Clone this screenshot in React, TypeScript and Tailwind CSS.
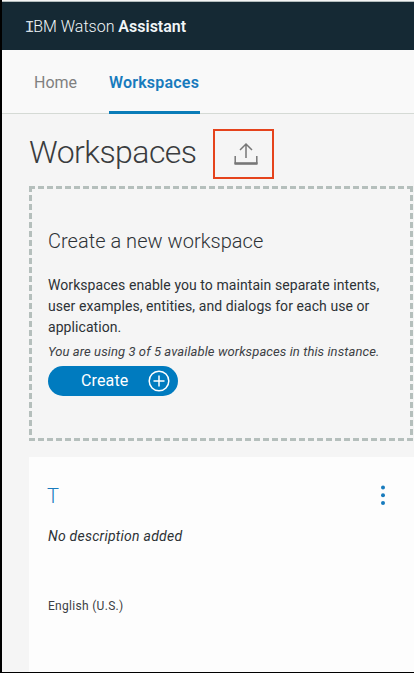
import React from "react";

function Header() {
  return (
    <header className="flex h-[48px] shrink-0 items-center bg-[#152934] pt-[2px] pl-6 text-base text-[#f1f6f8]">
      <h1 className="whitespace-pre leading-6">
        <span className="-mx-[1.5px] font-['Liberation_Mono',monospace] text-[17px] leading-none text-[#d5dde1]">I</span>
        <span className="font-light">BM Watson </span>
        <span className="font-semibold">Assistant</span>
      </h1>
    </header>
  );
}

function Nav() {
  return (
    <nav className="flex h-[64px] shrink-0 gap-8 border-b border-[#d5dad5] bg-[#f9f9f9] pl-8 text-base leading-6">
      <a className="w-[43px] pt-[21px] text-[#808080]">Home</a>
      <a className="-mb-px h-[64px] w-[91px] border-b-3 border-[#0a7cb8] pt-[21px] font-semibold tracking-[0.2px] whitespace-nowrap text-[#187bbd]">
        Workspaces
      </a>
    </nav>
  );
}

function UploadIcon() {
  return (
    <svg width="24" height="24" viewBox="0 0 24 24" fill="none" stroke="#777777" strokeWidth="1.5">
      <path d="M12 16V2M6 8l6-6 6 6" />
      <path d="M1.2 14v8M22.8 14v8" />
      <path d="M.5 21.5h23" strokeWidth="2.6" />
    </svg>
  );
}

function CreateCard() {
  return (
    <section className="relative ml-[27px] h-[255px] w-[384px] shrink-0 pt-[43px] pl-[19px] text-[#2d3236]">
      <svg className="absolute inset-0" width="384" height="255" fill="none" stroke="#b5bfbc" strokeWidth="3">
        <path d="M0 1.5H384M0 253.5H384" strokeDasharray="6 3" />
        <path d="M1.5 0V255M382.5 0V255" strokeDasharray="6 3" />
      </svg>
      <h3 className="text-xl leading-6 font-light tracking-[0.03px]">Create a new workspace</h3>
      <p className="mt-[22px] text-sm leading-[21px] tracking-[0.07px]">
        Workspaces enable you to maintain separate intents,
        <br />
        user examples, entities, and dialogs for each use or
        <br />
        application.
      </p>
      <p className="mt-[5px] text-[13px] leading-[18px] tracking-[0.09px] text-[#3c4044] italic">
        You are using 3 of 5 available workspaces in this instance.
      </p>
      <button className="mt-[5px] flex h-[30px] w-[130px] items-center justify-between rounded-full bg-[#007bbf] pr-2 pl-[33px] text-base leading-6 tracking-[0.15px] text-white">
        Create
        <svg width="22" height="22" viewBox="0 0 22 22" fill="none" stroke="white" strokeWidth="1.5">
          <circle cx="11" cy="11" r="9.8" />
          <path d="M11 5.5v11M5.5 11h11" />
        </svg>
      </button>
    </section>
  );
}

function WorkspaceCard() {
  return (
    <section className="mt-[16px] ml-[27px] flex flex-1 justify-between bg-[#fdfdfd] pt-[27px] pr-[28px] pl-[19px] text-[#2d3236]">
      <div>
        <h3 className="-ml-px text-xl leading-6 font-light text-[#187bbd]">T</h3>
        <p className="mt-[18px] text-sm leading-[21px] tracking-[0.25px] italic">No description added</p>
        <p className="mt-[50px] text-xs leading-[18px] tracking-[0.3px] text-[#3c4044]">English (U.S.)</p>
      </div>
      <svg className="mt-px" width="6" height="20" viewBox="0 0 6 20" fill="#187bbd">
        <circle cx="3" cy="2.4" r="2" />
        <circle cx="3" cy="10.2" r="2" />
        <circle cx="3" cy="18" r="2" />
      </svg>
    </section>
  );
}

export default function App() {
  return (
    <div className="h-[673px] w-[414px] overflow-hidden border-b border-l-2 border-black bg-[#f5f5f5] font-['Roboto','Liberation_Sans',sans-serif]">
      <div className="flex h-full flex-col">
        <div className="h-[2px] shrink-0 border-b border-[#b4bdbd] bg-[#f5f5f5]" />
        <Header />
        <Nav />
        <div className="flex h-[72px] shrink-0 items-start pl-[27px] text-[#3a3c3e]">
          <h2 className="mt-[18px] w-[184px] text-[32px] leading-10 font-light tracking-[-0.55px]">Workspaces</h2>
          <button className="mt-[15px] flex h-[50px] w-[61px] items-center justify-center border-2 border-[#e5431c] pl-[5px]">
            <UploadIcon />
          </button>
        </div>
        <CreateCard />
        <WorkspaceCard />
      </div>
    </div>
  );
}
